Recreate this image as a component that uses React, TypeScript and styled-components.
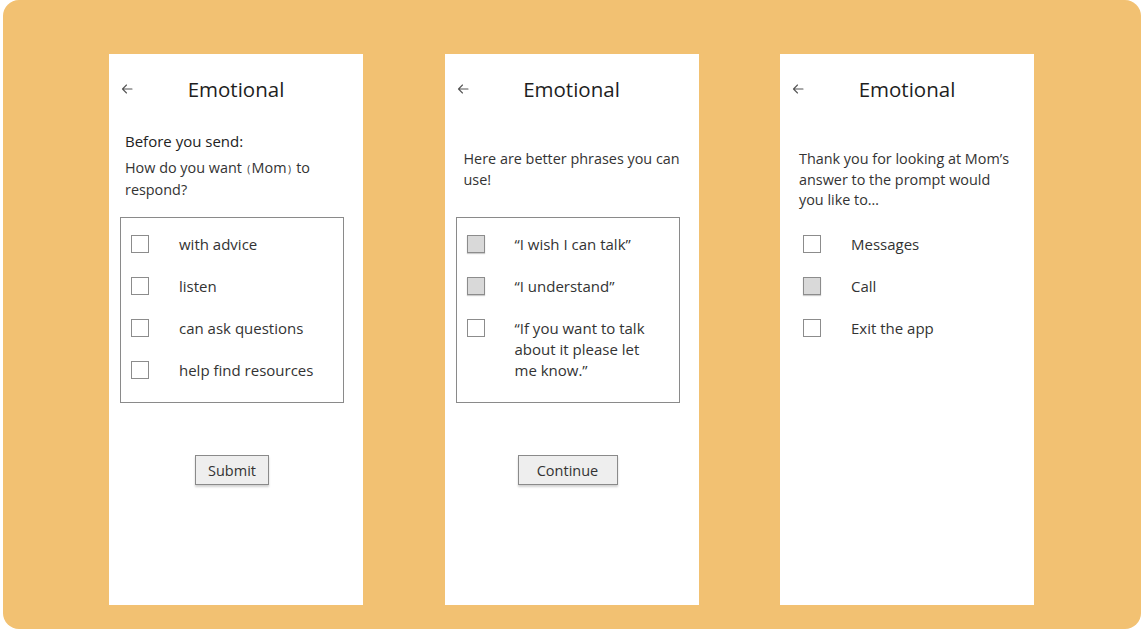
import styled, { createGlobalStyle } from 'styled-components';

type TOption = {
	label: string;
	checked?: boolean;
};

const GlobalStyle = createGlobalStyle`
	body {
		margin: 0;
		background: #ffffff;
		font-family: 'Open Sans', 'Noto Sans', sans-serif;
		color: #333333;
	}
`;

const sendOptions: TOption[] = [
	{ label: 'with advice' },
	{ label: 'listen' },
	{ label: 'can ask questions' },
	{ label: 'help find resources' },
];

const phraseOptions: TOption[] = [
	{ label: '“I wish I can talk”', checked: true },
	{ label: '“I understand”', checked: true },
	{ label: '“If you want to talk about it please let me know.”' },
];

const nextOptions: TOption[] = [
	{ label: 'Messages' },
	{ label: 'Call', checked: true },
	{ label: 'Exit the app' },
];

function BackArrow() {
	return (
		<svg width='12' height='10' viewBox='0 0 12 10' fill='none'>
			<path
				d='M11 5H1.5M5.5 1L1.5 5L5.5 9'
				stroke='#555'
				strokeWidth='1.1'
				strokeLinecap='round'
				strokeLinejoin='round'
			/>
		</svg>
	);
}

function Header() {
	return (
		<HeaderBar>
			<BackButton>
				<BackArrow />
			</BackButton>
			<Title>Emotional</Title>
		</HeaderBar>
	);
}

function OptionList({ options }: { options: TOption[] }) {
	return (
		<List>
			{options.map((option, idx) => (
				<Row key={idx}>
					<CheckBox $checked={option.checked} />
					<Label>{option.label}</Label>
				</Row>
			))}
		</List>
	);
}

export default function App() {
	return (
		<>
			<GlobalStyle />
			<Frame>
				<Screen>
					<Header />
					<Body $top={28}>
						<Heading>Before you send:</Heading>
						<Prompt>
							How do you want <Small>(</Small>Mom<Small>)</Small> to respond?
						</Prompt>
					</Body>
					<Content>
						<OptionBox $top={17}>
							<OptionList options={sendOptions} />
						</OptionBox>
						<Button $width={74}>Submit</Button>
					</Content>
				</Screen>

				<Screen>
					<Header />
					<Body $top={46} $indent={19}>
						<Prompt>Here are better phrases you can use!</Prompt>
					</Body>
					<Content>
						<OptionBox $top={27}>
							<OptionList options={phraseOptions} />
						</OptionBox>
						<Button $width={100}>Continue</Button>
					</Content>
				</Screen>

				<Screen>
					<Header />
					<Body $top={46} $indent={19}>
						<Prompt>
							Thank you for looking at Mom’s answer to the prompt would you
							like to…
						</Prompt>
					</Body>
					<PlainList>
						<OptionList options={nextOptions} />
					</PlainList>
				</Screen>
			</Frame>
		</>
	);
}

const Frame = styled.main`
	box-sizing: border-box;
	width: 1138px;
	height: 629px;
	margin-left: 3px;
	background: #f2c172;
	border-radius: 16px;
	display: flex;
	gap: 81.5px;
	padding: 54px 0 0 106px;
`;

const Screen = styled.section`
	width: 254px;
	height: 551px;
	background: #ffffff;
	display: flex;
	flex-direction: column;
	flex-shrink: 0;
`;

const HeaderBar = styled.header`
	display: grid;
	grid-template-columns: 1fr auto 1fr;
	align-items: center;
	margin-top: 21px;
	height: 28px;
`;

const BackButton = styled.span`
	display: flex;
	align-items: center;
	padding-left: 12px;
	margin-top: -1px;
`;

const Title = styled.h1`
	margin: 0;
	font-size: 20.5px;
	font-weight: 400;
	line-height: 28px;
	color: #1e1e1e;
`;

const Body = styled.div<{ $top: number; $indent?: number }>`
	margin-top: ${(p) => p.$top}px;
	padding: 0 18px 0 ${(p) => p.$indent ?? 16}px;
	display: flex;
	flex-direction: column;
	gap: 7px;
`;

const Heading = styled.p`
	margin: 0;
	font-size: 15px;
	line-height: 20px;
	color: #222;
`;

const Prompt = styled.p`
	margin: 0;
	font-size: 14.4px;
	line-height: 20.5px;
	color: #333;
`;

const Small = styled.span`
	font-size: 10px;
	margin: 0 1.5px;
`;

const Content = styled.div`
	width: 224px;
	margin-left: 11px;
	display: flex;
	flex-direction: column;
	align-items: center;
`;

const OptionBox = styled.div<{ $top: number }>`
	box-sizing: border-box;
	align-self: stretch;
	margin-top: ${(p) => p.$top}px;
	height: 186px;
	border: 1px solid #8a8a8a;
	padding: 16px 10px 0;
`;

const PlainList = styled.div`
	margin-top: 23px;
	padding-left: 23px;
`;

const List = styled.ul`
	margin: 0;
	padding: 0;
	list-style: none;
	display: flex;
	flex-direction: column;
	gap: 21px;
`;

const Row = styled.li`
	display: flex;
	align-items: flex-start;
	gap: 30px;
`;

const CheckBox = styled.span<{ $checked?: boolean }>`
	box-sizing: border-box;
	flex-shrink: 0;
	width: 18px;
	height: 18px;
	margin-top: 1px;
	border: 1px solid #8c8c8c;
	background: ${(p) => (p.$checked ? '#d9d9d9' : '#ffffff')};
	box-shadow: ${(p) => (p.$checked ? '0 1px 1px rgba(0,0,0,0.2)' : 'none')};
`;

const Label = styled.span`
	font-size: 15px;
	line-height: 21px;
	color: #333;
	max-width: 140px;
`;

const Button = styled.button<{ $width: number }>`
	margin-top: 52px;
	width: ${(p) => p.$width}px;
	height: 30px;
	padding: 0;
	background: #eeeeee;
	border: 1px solid #8a8a8a;
	box-shadow: 0 2px 2px rgba(0, 0, 0, 0.18);
	font-family: 'Open Sans', 'Noto Sans', sans-serif;
	font-size: 14.5px;
	color: #333;
`;
